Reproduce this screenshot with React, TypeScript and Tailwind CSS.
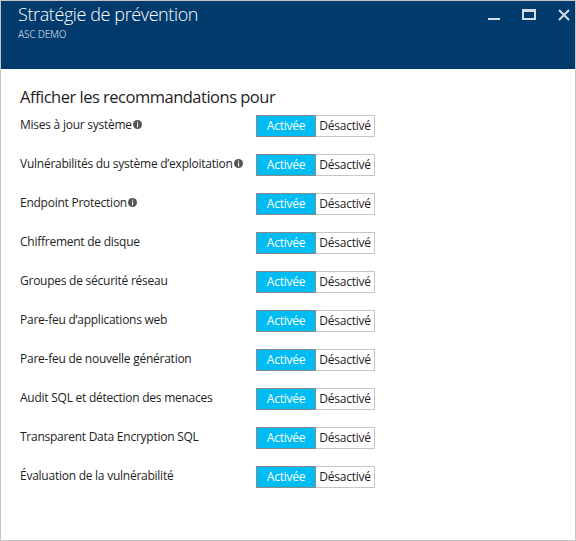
const rows: { label: string; info?: boolean }[] = [
  { label: 'Mises à jour système', info: true },
  { label: 'Vulnérabilités du système d’exploitation', info: true },
  { label: 'Endpoint Protection', info: true },
  { label: 'Chiffrement de disque' },
  { label: 'Groupes de sécurité réseau' },
  { label: 'Pare-feu d’applications web' },
  { label: 'Pare-feu de nouvelle génération' },
  { label: 'Audit SQL et détection des menaces' },
  { label: 'Transparent Data Encryption SQL' },
  { label: 'Évaluation de la vulnérabilité' },
];

function InfoIcon() {
  return (
    <svg width="9" height="9" viewBox="0 0 9 9" className="ml-px mt-[3px] shrink-0">
      <circle cx="4.5" cy="4.5" r="4.5" fill="#555555" />
      <rect x="4" y="1.6" width="1.1" height="1.1" fill="#ffffff" />
      <rect x="4" y="3.5" width="1.1" height="3.9" fill="#ffffff" />
    </svg>
  );
}

function Toggle() {
  return (
    <div className="flex h-[22px] text-[12px] leading-[20px]">
      <button className="w-[60px] border border-[#8a8a8a] bg-[#00bcf2] text-white">
        Activée
      </button>
      <button className="w-[59px] border-y border-r border-[#c6c6c6] bg-white text-[#1e1e1e]">
        Désactivé
      </button>
    </div>
  );
}

export default function App() {
  return (
    <div className="w-[576px] h-[541px] border border-[#c4c4c4] bg-white flex flex-col font-['Open_Sans','Noto_Sans',sans-serif] tracking-[-0.25px]">
      {/* Header */}
      <div className="h-[68px] bg-[#013b6d] flex justify-between pl-[17px] pr-[5px]">
        <div className="pt-[2px]">
          <h1 className="text-[18px] leading-[22px] font-light tracking-[-0.4px] text-white">
            Stratégie de prévention
          </h1>
          <p className="mt-[3px] text-[10px] leading-[12px] text-[#a9bdd2]">ASC DEMO</p>
        </div>
        <div className="flex items-start gap-[22px] pt-[8px]">
          <svg width="12" height="12" viewBox="0 0 12 12">
            <rect x="0" y="9" width="12" height="2" fill="#d4dde8" />
          </svg>
          <svg width="14" height="11" viewBox="0 0 14 11">
            <rect x="1" y="1.5" width="12" height="8.5" fill="none" stroke="#d4dde8" strokeWidth="2" />
            <rect x="0" y="0" width="14" height="3" fill="#d4dde8" />
          </svg>
          <svg width="12" height="12" viewBox="0 0 12 12">
            <path d="M1 1 L11 11 M11 1 L1 11" stroke="#d4dde8" strokeWidth="2" />
          </svg>
        </div>
      </div>

      {/* Body */}
      <div className="px-[19px] pt-[16px]">
        <h2 className="text-[16.5px] leading-[24px] tracking-[-0.5px] text-[#1e1e1e] mb-[6px]">
          Afficher les recommandations pour
        </h2>
        <div className="flex flex-col">
          {rows.map((r) => (
            <div key={r.label} className="flex items-start h-[39px]">
              <div className="w-[236px] pt-[2px] flex items-start text-[12px] leading-[16px] text-[#1e1e1e]">
                <span>{r.label}</span>
                {r.info && <InfoIcon />}
              </div>
              <Toggle />
            </div>
          ))}
        </div>
      </div>
    </div>
  );
}
